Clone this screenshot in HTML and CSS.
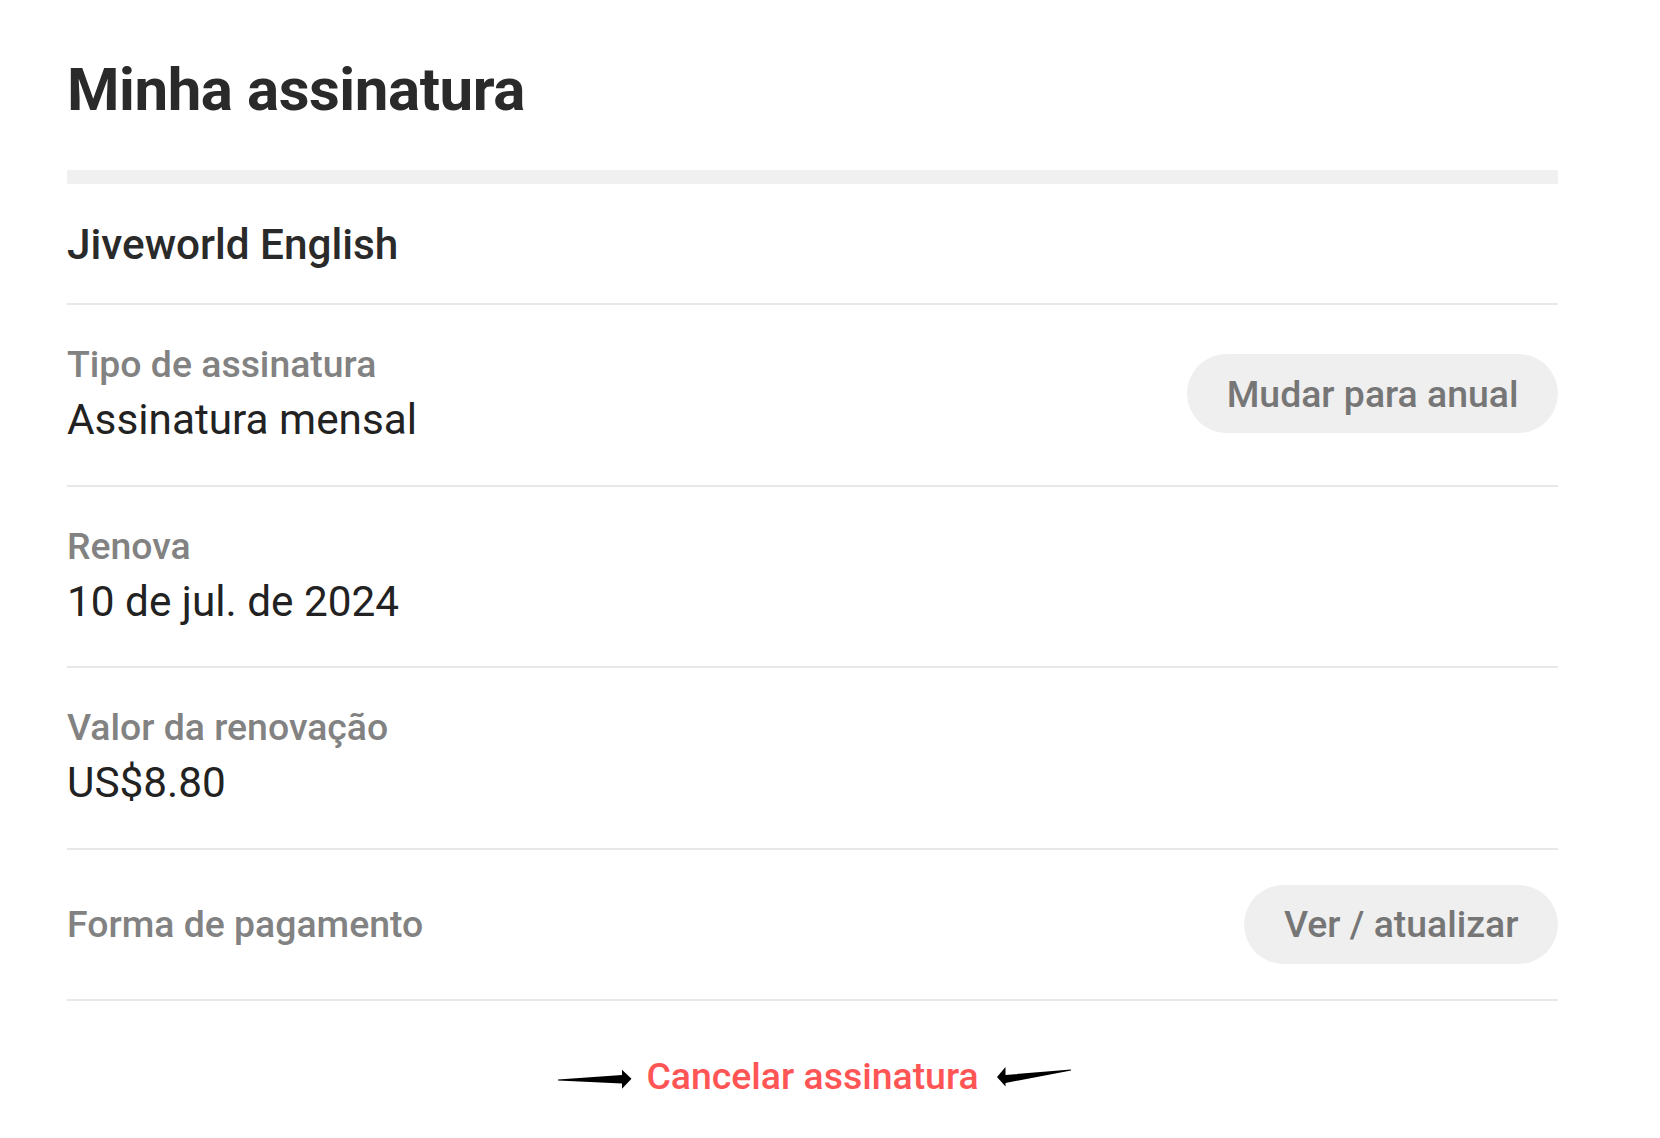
FILE: index.html
```html
<!DOCTYPE html>
<html lang="pt-BR">
<head>
<meta charset="utf-8">
<title>Minha assinatura</title>
<link rel="stylesheet" href="styles.css">
</head>
<body>
<main class="page">
  <h1 class="title">Minha assinatura</h1>
  <div class="bar"></div>
  <div class="product">Jiveworld English</div>

  <div class="row">
    <div class="info">
      <div class="label">Tipo de assinatura</div>
      <div class="value">Assinatura mensal</div>
    </div>
    <button class="pill">Mudar para anual</button>
  </div>

  <div class="row">
    <div class="info">
      <div class="label">Renova</div>
      <div class="value">10 de jul. de 2024</div>
    </div>
  </div>

  <div class="row">
    <div class="info">
      <div class="label">Valor da renovação</div>
      <div class="value">US$8.80</div>
    </div>
  </div>

  <div class="row row-single">
    <div class="label">Forma de pagamento</div>
    <button class="pill">Ver / atualizar</button>
  </div>

  <div class="cancel-row">
    <svg class="arrow" width="74" height="43" viewBox="0 0 74 43">
      <path d="M0 24.6 L64 20 L64 14.7 L73.5 23.8 L64 33.7 L64 28.6 L0 25.4 Z" fill="#000"/>
    </svg>
    <a class="cancel" href="#">Cancelar assinatura</a>
    <svg class="arrow" width="74" height="43" viewBox="0 0 74 43">
      <path d="M0 22 L8.5 12 L8.5 20 L74 14.5 L74 15.5 L8.5 28 L8.5 31.5 Z" fill="#000"/>
    </svg>
  </div>
</main>
</body>
</html>
```

FILE: styles.css
```css
html, body {
  margin: 0;
  padding: 0;
  background: #ffffff;
}

body {
  font-family: Roboto, "Noto Sans", "Liberation Sans", sans-serif;
  color: #232323;
}

.page {
  margin-left: 67px;
  width: 1491px;
  padding-top: 54px;
}

.title {
  margin: 0;
  font-size: 60px;
  font-weight: 700;
  letter-spacing: -0.45px;
  line-height: normal;
  color: #2a2a2a;
}

.bar {
  margin-top: 45px;
  height: 14px;
  background: #f0f0f0;
}

.product {
  padding: 36px 0 34px;
  font-size: 42.3px;
  font-weight: 500;
  line-height: 49px;
  color: #2a2a2a;
  border-bottom: 2px solid #e8e8e8;
}

.row {
  display: flex;
  align-items: center;
  justify-content: space-between;
  padding: 38px 0 40.5px;
  border-bottom: 2px solid #e8e8e8;
}

.row-single {
  padding: 35px 0;
}

.label {
  font-size: 37.4px;
  font-weight: 500;
  line-height: 43px;
  color: #828282;
}

.value {
  margin-top: 9px;
  font-size: 42.3px;
  font-weight: 400;
  line-height: 49px;
  color: #222222;
}

.pill {
  height: 79px;
  padding: 0 39.5px;
  border: none;
  border-radius: 40px;
  background: #efefef;
  color: #767676;
  font-family: Roboto, "Noto Sans", "Liberation Sans", sans-serif;
  font-size: 37.4px;
  font-weight: 500;
  cursor: pointer;
}

.cancel-row {
  display: flex;
  justify-content: center;
  align-items: center;
  margin-top: 54px;
  padding-left: 4px;
}

.cancel {
  margin: 0 18px 0 14px;
  font-size: 37.4px;
  font-weight: 500;
  line-height: 43px;
  color: #ff5555;
  text-decoration: none;
}

.arrow {
  display: block;
  flex: none;
}
```
